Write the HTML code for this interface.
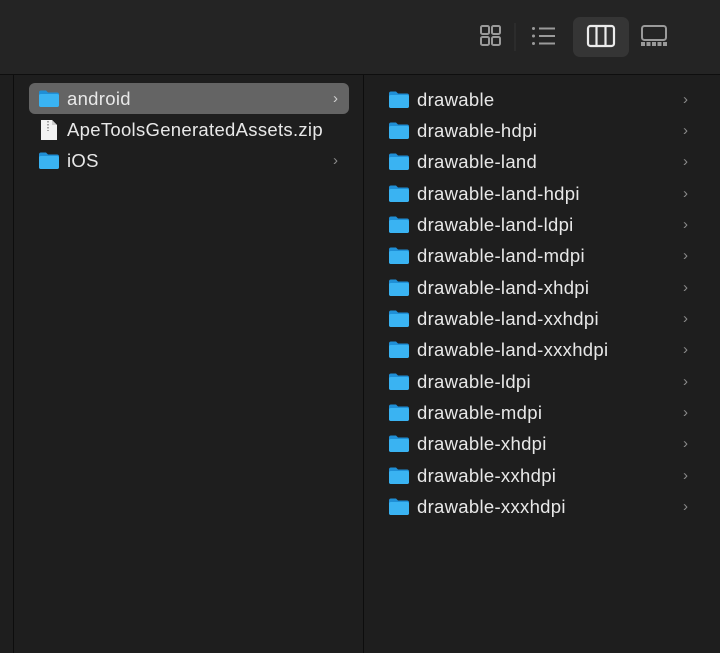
<!DOCTYPE html><html><head><style>
body{margin:0;width:720px;height:653px;background:#1e1e1e;font-family:"Liberation Sans",sans-serif;overflow:hidden;position:relative;color:#e6e6e6}
.tb{position:absolute;left:0;top:0;width:720px;height:74px;background:#242424;border-bottom:1px solid #0e0e0e}
.div{position:absolute;top:75px;bottom:0;width:1px;background:#0d0d0d}
.row{position:absolute;height:31px;font-size:18.5px;line-height:31px}
.row svg{position:absolute;top:6px}
.row span{position:absolute;top:0;letter-spacing:0.3px}
.chev{position:absolute;color:#8a8a8a;font-size:15px}
.sel{position:absolute;left:29px;top:83px;width:320px;height:31px;background:#646464;border-radius:6px}
</style></head><body>
<div class="tb">
<svg width="720" height="74" style="position:absolute;left:0;top:0">
<g fill="none" stroke="#9a9a9a" stroke-width="2">
<rect x="481" y="26" width="8" height="8" rx="1.5"/><rect x="492" y="26" width="8" height="8" rx="1.5"/>
<rect x="481" y="37" width="8" height="8" rx="1.5"/><rect x="492" y="37" width="8" height="8" rx="1.5"/>
<line x1="539" y1="28.5" x2="555" y2="28.5"/><line x1="539" y1="36" x2="555" y2="36"/><line x1="539" y1="43.5" x2="555" y2="43.5"/>
</g>
<g fill="#9a9a9a"><circle cx="533.5" cy="28.5" r="1.5"/><circle cx="533.5" cy="36" r="1.5"/><circle cx="533.5" cy="43.5" r="1.5"/></g>
<line x1="515" y1="23" x2="515" y2="51" stroke="#333" stroke-width="1"/>
<rect x="573" y="17" width="56" height="40" rx="7" fill="#353535"/>
<g fill="none" stroke="#ececec" stroke-width="2.2"><rect x="588" y="26" width="26" height="20" rx="2.5"/><line x1="596.5" y1="26" x2="596.5" y2="46"/><line x1="605.5" y1="26" x2="605.5" y2="46"/></g>
<g fill="none" stroke="#9a9a9a" stroke-width="2"><rect x="642" y="26" width="24" height="14" rx="2.5"/></g>
<g fill="#9a9a9a"><rect x="641" y="42" width="4" height="4"/><rect x="646.5" y="42" width="4" height="4"/><rect x="652" y="42" width="4" height="4"/><rect x="657.5" y="42" width="4" height="4"/><rect x="663" y="42" width="4" height="4"/></g>
</svg></div>
<div class="div" style="left:13px"></div>
<div class="div" style="left:363px"></div>
<div class="sel"></div>
<div id="c"></div>
<script>
function folder(x){return '<svg width="22" height="19" style="left:'+x+'px" viewBox="0 0 22 19"><path d="M1 3.5Q1 1.5 3 1.5H8L10 3.5H19Q21 3.5 21 5.5V16Q21 18 19 18H3Q1 18 1 16Z" fill="#1f8fd6"/><path d="M1 6.5Q1 5 3 5H19Q21 5 21 6.5V16Q21 18 19 18H3Q1 18 1 16Z" fill="#3ab3f2"/></svg>';}
var h='';
function row(x,y,name,icon,cx,cc){h+='<div class="row" style="left:0;top:'+y+'px;width:720px">'+icon+'<span style="left:'+x+'px;color:#e8e8e8">'+name+'</span>'+(cx?'<span class="chev" style="left:'+cx+'px;'+(cc?'color:'+cc:'')+'">&#8250;</span>':'')+'</div>';}
row(67,83,'android',folder(38),333,'#d0d0d0');
row(67,114,'ApeToolsGeneratedAssets.zip','<svg width="20" height="22" style="left:39px;top:5px" viewBox="0 0 20 22"><path d="M2 1H13L18 6V21H2Z" fill="#f2f2f2"/><path d="M13 1V6H18" fill="#cfcfcf"/><path d="M9 2V12" stroke="#888" stroke-width="1.5" stroke-dasharray="1.5 1.5"/></svg>',0);
row(67,145,'iOS',folder(38),333);
var n=['drawable','drawable-hdpi','drawable-land','drawable-land-hdpi','drawable-land-ldpi','drawable-land-mdpi','drawable-land-xhdpi','drawable-land-xxhdpi','drawable-land-xxxhdpi','drawable-ldpi','drawable-mdpi','drawable-xhdpi','drawable-xxhdpi','drawable-xxxhdpi'];
for(var i=0;i<n.length;i++)row(417,83.5+i*31.35,n[i],folder(388),683);
document.getElementById('c').innerHTML=h;
</script>
</body></html>
